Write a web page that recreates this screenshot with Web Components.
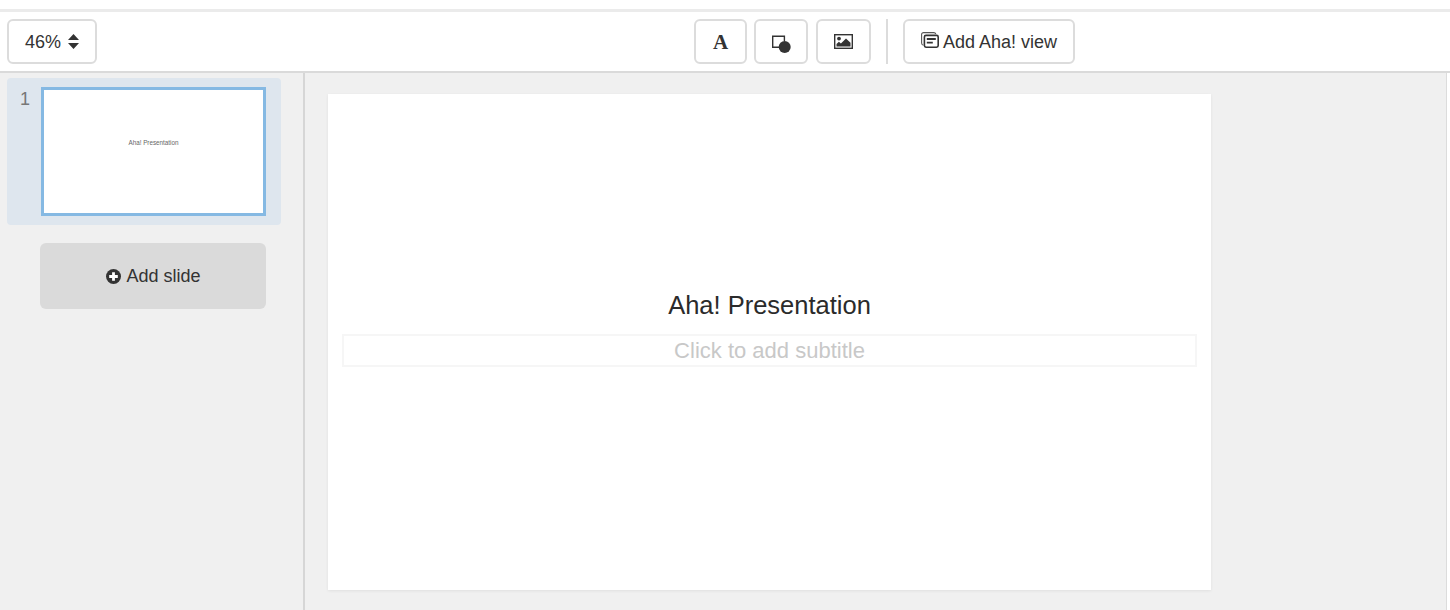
<!DOCTYPE html>
<html>
<head>
<meta charset="utf-8">
<style>
  html, body { margin: 0; height: 100%; background: #fff; }
  body { font-family: "Liberation Sans", Arial, sans-serif; color: #333; overflow: hidden; }
</style>
</head>
<body>
<slide-editor>
  <editor-toolbar slot="toolbar"></editor-toolbar>
  <slide-sidebar slot="sidebar"></slide-sidebar>
  <slide-canvas slot="canvas" title-text="Aha! Presentation" subtitle="Click to add subtitle"></slide-canvas>
</slide-editor>

<script>
customElements.define(
  'slide-editor',
  class SlideEditor extends HTMLElement {
    constructor() {
      super();
      const shadow = this.attachShadow({ mode: 'open' });
      shadow.innerHTML = `
      <style>
        :host {
          display: flex;
          flex-direction: column;
          width: 1450px;
          height: 610px;
          padding-top: 9px;
          box-sizing: border-box;
        }
        #body {
          flex: 1;
          display: flex;
          min-height: 0;
          margin-right: 3px;
          border-right: 1px solid #dcdcdc;
        }
      </style>
      <slot name="toolbar"></slot>
      <div id="body">
        <slot name="sidebar"></slot>
        <slot name="canvas"></slot>
      </div>
    `;
    }
  }
);

customElements.define(
  'tool-button',
  class ToolButton extends HTMLElement {
    constructor() {
      super();
      const shadow = this.attachShadow({ mode: 'open' });
      shadow.innerHTML = `
      <style>
        :host {
          display: inline-flex;
          align-items: center;
          justify-content: center;
          height: 45px;
          box-sizing: border-box;
          border: 2px solid #dcdcdc;
          border-radius: 6px;
          background: #fff;
          font-size: 18px;
          color: #333;
          white-space: nowrap;
        }
      </style>
      <slot></slot>
    `;
    }
  }
);

customElements.define(
  'editor-toolbar',
  class EditorToolbar extends HTMLElement {
    constructor() {
      super();
      const shadow = this.attachShadow({ mode: 'open' });
      shadow.innerHTML = `
      <style>
        :host {
          display: flex;
          align-items: flex-start;
          height: 64px;
          box-sizing: border-box;
          padding: 7px 0 0 7px;
          border-top: 3px solid #ebebeb;
          border-bottom: 2px solid #dadada;
          background: #fff;
        }
        #zoom { width: 90px; gap: 7px; }
        #text { width: 53px; margin-left: 597px; }
        #shape { width: 54px; margin-left: 7px; }
        #picture { width: 55px; margin-left: 8px; }
        #divider {
          width: 2px;
          height: 45px;
          background: #dcdcdc;
          margin: 0 15px;
        }
        #view { width: 172px; gap: 4px; }
        .label { margin-top: 2px; }
        .letter {
          font-family: "Liberation Serif", serif;
          font-weight: bold;
          font-size: 21px;
          line-height: 1;
          color: #333;
          margin-top: 1px;
        }
        svg { display: block; }
      </style>
      <tool-button id="zoom">
        <span class="label">46%</span>
        <svg width="11" height="15" viewBox="0 0 11 15"><path fill="#333" d="M5.5 0 11 6H0zM0 9h11l-5.5 6z"/></svg>
      </tool-button>
      <tool-button id="text"><span class="letter">A</span></tool-button>
      <tool-button id="shape">
        <svg width="20" height="22" viewBox="0 0 20 22">
          <path fill="none" stroke="#333" stroke-width="1.4" d="M8 16.3H1.7V5.2h11.7V10"/>
          <circle cx="13.7" cy="16" r="6" fill="#333"/>
        </svg>
      </tool-button>
      <tool-button id="picture">
        <svg width="19" height="15" viewBox="0 0 19 15">
          <rect x=".7" y=".7" width="17.6" height="13.6" fill="#fff" stroke="#333" stroke-width="1.4"/>
          <circle cx="5" cy="4.6" r="1.9" fill="#333"/>
          <path fill="#333" d="M2.5 12.5V10l2.4-2.2 2 1.6L12 4.4l4.5 4.4v3.7z"/>
        </svg>
      </tool-button>
      <div id="divider"></div>
      <tool-button id="view">
        <svg width="18" height="16" viewBox="0 0 18 16" style="margin-top:-3px">
          <path fill="none" stroke="#555" stroke-width="1.1" d="M2.4 13.2C1.2 13 .6 12.2.6 11V2.6C.6 1.4 1.4.6 2.6.6h10.2c1 0 1.7.5 2 1.4"/>
          <rect x="3.4" y="3.4" width="13.8" height="11.8" rx="1.6" fill="#fff" stroke="#333" stroke-width="1.6"/>
          <path stroke="#333" stroke-width="1.8" d="M5.8 7h9M5.8 10.6h6"/>
        </svg>
        <span class="label">Add Aha! view</span>
      </tool-button>
    `;
    }
  }
);

customElements.define(
  'slide-thumb',
  class SlideThumb extends HTMLElement {
    constructor() {
      super();
      const shadow = this.attachShadow({ mode: 'open' });
      shadow.innerHTML = `
      <style>
        :host {
          display: flex;
          width: 274px;
          height: 147px;
          box-sizing: border-box;
          padding: 9px 0 0 13px;
          background: #dee6ee;
          border-radius: 4px;
        }
        #num {
          width: 21px;
          font-size: 18px;
          line-height: 24px;
          color: #777;
        }
        #frame {
          width: 225px;
          height: 129px;
          box-sizing: border-box;
          border: 3px solid #85b9e3;
          background: #fff;
          display: flex;
          align-items: center;
          justify-content: center;
          padding-bottom: 17px;
        }
        #label {
          font-size: 6.3px;
          line-height: 8px;
          color: #666;
        }
      </style>
      <div id="num"><slot name="number"></slot></div>
      <div id="frame"><div id="label"><slot></slot></div></div>
    `;
    }
  }
);

customElements.define(
  'slide-sidebar',
  class SlideSidebar extends HTMLElement {
    constructor() {
      super();
      const shadow = this.attachShadow({ mode: 'open' });
      shadow.innerHTML = `
      <style>
        :host {
          display: block;
          flex: none;
          width: 305px;
          box-sizing: border-box;
          padding: 5px 0 0 7px;
          border-right: 2px solid #d6d6d6;
          background: #f0f0f0;
          height: 100%;
        }
        #add {
          width: 226px;
          height: 66px;
          margin: 18px 0 0 33px;
          display: flex;
          align-items: center;
          justify-content: center;
          gap: 5px;
          background: #dadada;
          border-radius: 6px;
          font-size: 18px;
          color: #333;
          padding-left: 1px;
          box-sizing: border-box;
        }
        svg { display: block; }
      </style>
      <slide-thumb><span slot="number">1</span>Aha! Presentation</slide-thumb>
      <div id="add">
        <svg width="15" height="15" viewBox="0 0 15 15">
          <circle cx="7.5" cy="7.5" r="7.5" fill="#333"/>
          <path stroke="#fff" stroke-width="2.8" d="M7.5 3.2v8.6M3.2 7.5h8.6"/>
        </svg>
        <span>Add slide</span>
      </div>
    `;
    }
  }
);

customElements.define(
  'slide-canvas',
  class SlideCanvas extends HTMLElement {
    constructor() {
      super();
      const shadow = this.attachShadow({ mode: 'open' });
      shadow.innerHTML = `
      <style>
        :host {
          display: block;
          flex: 1;
          height: 100%;
          box-sizing: border-box;
          padding: 21px 0 0 23px;
          background: #f0f0f0;
        }
        #slide {
          width: 883px;
          height: 496px;
          box-sizing: border-box;
          padding: 193px 14px 0;
          background: #fff;
          box-shadow: 0 1px 3px rgba(0, 0, 0, 0.07);
          text-align: center;
        }
        #title {
          font-size: 25.5px;
          line-height: 36px;
          color: #2b2b2b;
          margin-bottom: 11px;
        }
        #subtitle {
          height: 33px;
          box-sizing: border-box;
          border: 2px solid #f6f6f6;
          font-size: 22px;
          line-height: 29px;
          color: #c8c8c8;
        }
      </style>
      <div id="slide">
        <div id="title"></div>
        <div id="subtitle"></div>
      </div>
    `;
      shadow.getElementById('title').textContent = this.getAttribute('title-text');
      shadow.getElementById('subtitle').textContent = this.getAttribute('subtitle');
    }
  }
);
</script>
</body>
</html>
